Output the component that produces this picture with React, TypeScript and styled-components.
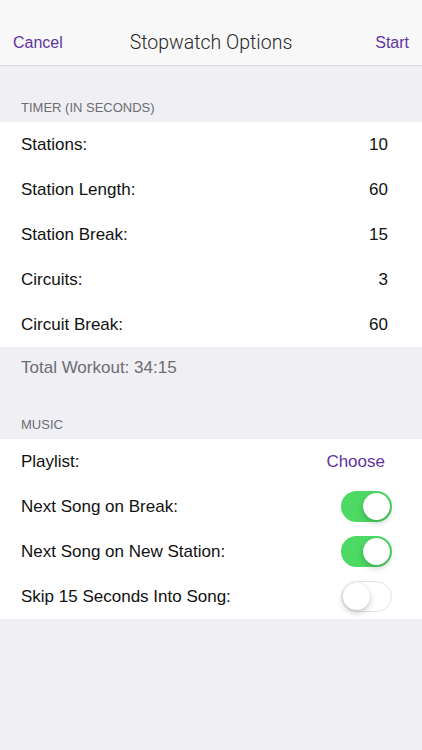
import styled, { createGlobalStyle } from 'styled-components';

const GlobalStyle = createGlobalStyle`
  html, body {
    margin: 0;
    padding: 0;
    background: #efeff4;
    font-family: "Liberation Sans", Arial, sans-serif;
  }
`;

const PURPLE = '#5f35a0';

const timerRows = [
  { label: 'Stations:', value: '10' },
  { label: 'Station Length:', value: '60' },
  { label: 'Station Break:', value: '15' },
  { label: 'Circuits:', value: '3' },
  { label: 'Circuit Break:', value: '60' },
];

const musicToggles = [
  { label: 'Next Song on Break:', on: true },
  { label: 'Next Song on New Station:', on: true },
  { label: 'Skip 15 Seconds Into Song:', on: false },
];

export default function App() {
  return (
    <Page>
      <GlobalStyle />
      <NavBar>
        <NavButton>Cancel</NavButton>
        <NavTitle>Stopwatch Options</NavTitle>
        <NavButton $right>Start</NavButton>
      </NavBar>

      <SectionHeader $height={56}>TIMER (IN SECONDS)</SectionHeader>
      <Group>
        {timerRows.map((r) => (
          <Row key={r.label}>
            <Label>{r.label}</Label>
            <Value>{r.value}</Value>
          </Row>
        ))}
      </Group>
      <Footer>Total Workout: 34:15</Footer>

      <SectionHeader $height={61}>MUSIC</SectionHeader>
      <Group>
        <Row>
          <Label>Playlist:</Label>
          <LinkButton>Choose</LinkButton>
        </Row>
        {musicToggles.map((t) => (
          <Row key={t.label}>
            <Label>{t.label}</Label>
            <Switch $on={t.on}>
              <Knob $on={t.on} />
            </Switch>
          </Row>
        ))}
      </Group>
    </Page>
  );
}

const Page = styled.div`
  min-height: 750px;
  background: #efeff4;
`;

const NavBar = styled.div`
  height: 45px;
  padding: 20px 13px 0;
  background: #f8f8f8;
  border-bottom: 1px solid #d6d6da;
  display: grid;
  grid-template-columns: 1fr auto 1fr;
  align-items: center;
`;

const NavButton = styled.span<{ $right?: boolean }>`
  font-size: 16px;
  color: ${PURPLE};
  justify-self: ${(p) => (p.$right ? 'end' : 'start')};
  padding-top: 1px;
`;

const NavTitle = styled.span`
  font-family: Roboto, "Liberation Sans", sans-serif;
  font-weight: 300;
  font-size: 19.5px;
  color: #2a2a2a;
`;

const SectionHeader = styled.div<{ $height: number }>`
  height: ${(p) => p.$height}px;
  box-sizing: border-box;
  display: flex;
  align-items: flex-end;
  padding: 0 21px 6px;
  font-size: 13px;
  line-height: 16px;
  color: #6d6d72;
`;

const Group = styled.div`
  background: #fff;
`;

const Row = styled.div`
  height: 45px;
  display: flex;
  align-items: center;
  justify-content: space-between;
  padding: 0 30px 0 21px;
`;

const Label = styled.span`
  font-size: 17px;
  color: #111;
`;

const Value = styled.span`
  font-size: 17px;
  color: #111;
  padding-right: 4px;
`;

const LinkButton = styled.span`
  font-size: 17px;
  color: ${PURPLE};
  padding-right: 7px;
`;

const Footer = styled.div`
  padding: 11px 21px 0;
  font-size: 17px;
  line-height: 20px;
  color: #6d6d72;
`;

const Switch = styled.div<{ $on: boolean }>`
  position: relative;
  width: 51px;
  height: 31px;
  box-sizing: border-box;
  border-radius: 16px;
  background: ${(p) => (p.$on ? '#4cd964' : '#fff')};
  border: ${(p) => (p.$on ? 'none' : '1.5px solid #e3e3e6')};
`;

const Knob = styled.div<{ $on: boolean }>`
  position: absolute;
  top: ${(p) => (p.$on ? '2px' : '0.5px')};
  left: ${(p) => (p.$on ? '22px' : '0.5px')};
  width: 27px;
  height: 27px;
  border-radius: 50%;
  background: #fff;
  box-shadow: 0 3px 6px rgba(0, 0, 0, 0.2), 0 0 1px rgba(0, 0, 0, 0.15);
`;
